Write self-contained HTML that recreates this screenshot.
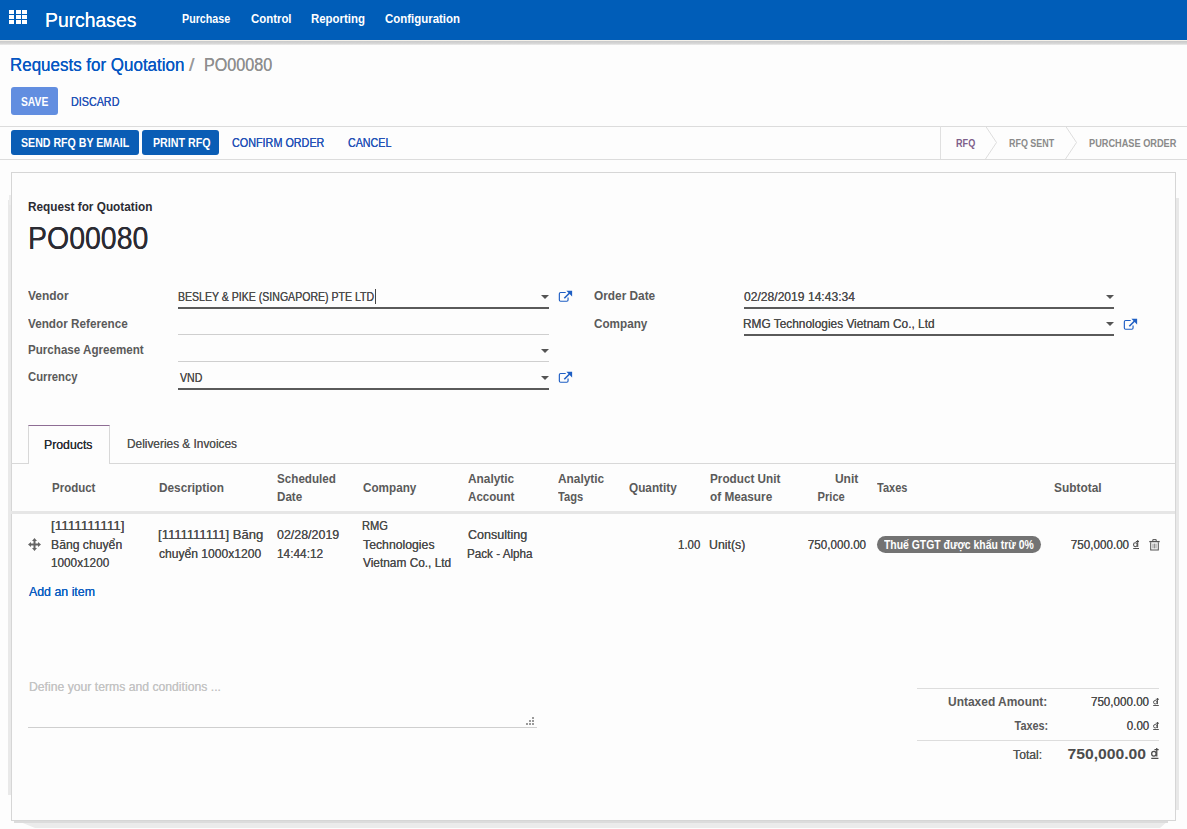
<!DOCTYPE html><html><head><meta charset="utf-8"><style>
html,body{margin:0;padding:0;width:1187px;height:829px;overflow:hidden;background:#fdfdfd;font-family:"Liberation Sans",sans-serif;position:relative}
.t{position:absolute;white-space:nowrap}
</style></head><body>
<div style="position:absolute;left:0;top:0;width:1187px;height:40px;background:#005db8"></div>
<div style="position:absolute;left:0;top:40px;width:1187px;height:1px;background:#f4f1ea"></div>
<div style="position:absolute;left:0;top:41px;width:1187px;height:4px;background:linear-gradient(#c9c9c9,#d6d6d6 60%,#ececec)"></div>
<div style="position:absolute;left:9.0px;top:10px;width:5px;height:4px;background:#fff"></div><div style="position:absolute;left:15.5px;top:10px;width:5px;height:4px;background:#fff"></div><div style="position:absolute;left:22.0px;top:10px;width:5px;height:4px;background:#fff"></div><div style="position:absolute;left:9.0px;top:15px;width:5px;height:4px;background:#fff"></div><div style="position:absolute;left:15.5px;top:15px;width:5px;height:4px;background:#fff"></div><div style="position:absolute;left:22.0px;top:15px;width:5px;height:4px;background:#fff"></div><div style="position:absolute;left:9.0px;top:20px;width:5px;height:4px;background:#fff"></div><div style="position:absolute;left:15.5px;top:20px;width:5px;height:4px;background:#fff"></div><div style="position:absolute;left:22.0px;top:20px;width:5px;height:4px;background:#fff"></div>
<div style="position:absolute;left:11px;top:87px;width:47px;height:28px;background:#628ee0;border-radius:3px"></div>
<div style="position:absolute;left:0;top:126px;width:1187px;height:1px;background:#dcdcdc"></div>
<div style="position:absolute;left:11px;top:130px;width:128px;height:25px;background:#0a5db5;border-radius:3px"></div>
<div style="position:absolute;left:142px;top:130px;width:77px;height:25px;background:#0a5db5;border-radius:3px"></div>
<div style="position:absolute;left:0;top:159px;width:1187px;height:1px;background:#dcdcdc"></div>
<div style="position:absolute;left:940px;top:126px;width:1px;height:33px;background:#e0e0e0"></div>
<svg style="position:absolute;left:980px;top:126px" width="100" height="33"><polyline points="5.5,0 16.5,16.5 5.5,33" fill="none" stroke="#dedede" stroke-width="1"/><polyline points="85.5,0 96.5,16.5 85.5,33" fill="none" stroke="#dedede" stroke-width="1"/></svg>
<div style="position:absolute;left:8px;top:200px;width:3px;height:595px;background:#e9e9e9"></div>
<div style="position:absolute;left:9px;top:195px;width:2px;height:10px;background:#ededed"></div>
<div style="position:absolute;left:1176px;top:198px;width:3px;height:612px;background:#e8e8e8"></div>
<svg style="position:absolute;left:0;top:819px" width="1187" height="10"><polygon points="18,2 1168,2 1160,9 35,9" fill="#ebebeb"/><rect x="14" y="2" width="1154" height="2" fill="#dcdcdc"/></svg>
<div style="position:absolute;left:11px;top:172px;width:1163px;height:647px;border:1px solid #d6d6d6;background:#fdfdfd"></div>
<div style="position:absolute;left:375px;top:289px;width:1px;height:15px;background:#444"></div>
<div style="position:absolute;left:178px;top:307px;width:371px;height:2px;background:#5a5a5a"></div>
<div style="position:absolute;left:178px;top:334px;width:371px;height:1px;background:#cfcfcf"></div>
<div style="position:absolute;left:178px;top:361px;width:371px;height:1px;background:#cfcfcf"></div>
<div style="position:absolute;left:178px;top:388px;width:371px;height:2px;background:#5a5a5a"></div>
<div style="position:absolute;left:744px;top:307px;width:370px;height:2px;background:#5a5a5a"></div>
<div style="position:absolute;left:744px;top:334px;width:370px;height:2px;background:#5a5a5a"></div>
<svg style="position:absolute;left:541.4px;top:295px" width="8" height="4"><polygon points="0,0 8,0 4,4" fill="#555"/></svg>
<svg style="position:absolute;left:541.4px;top:349px" width="8" height="4"><polygon points="0,0 8,0 4,4" fill="#555"/></svg>
<svg style="position:absolute;left:541.4px;top:376px" width="8" height="4"><polygon points="0,0 8,0 4,4" fill="#555"/></svg>
<svg style="position:absolute;left:1106.2px;top:295px" width="8" height="4"><polygon points="0,0 8,0 4,4" fill="#555"/></svg>
<svg style="position:absolute;left:1106.2px;top:322px" width="8" height="4"><polygon points="0,0 8,0 4,4" fill="#555"/></svg>
<svg style="position:absolute;left:558px;top:290px" width="15" height="13" viewBox="0 0 15 13"><path d="M7.7 2.45 H2.6 Q1.35 2.45 1.35 3.7 V10 Q1.35 11.25 2.6 11.25 H8.8 Q10.05 11.25 10.05 10 V7.5" fill="none" stroke="#1f5fc4" stroke-width="1.15"/><path d="M6.3 8.3 L11.8 2.8" stroke="#1f5fc4" stroke-width="1.6"/><polygon points="8.4,0.7 14.1,0.7 14.1,6.4" fill="#1f5fc4"/></svg>
<svg style="position:absolute;left:558.2px;top:371.4px" width="15" height="13" viewBox="0 0 15 13"><path d="M7.7 2.45 H2.6 Q1.35 2.45 1.35 3.7 V10 Q1.35 11.25 2.6 11.25 H8.8 Q10.05 11.25 10.05 10 V7.5" fill="none" stroke="#1f5fc4" stroke-width="1.15"/><path d="M6.3 8.3 L11.8 2.8" stroke="#1f5fc4" stroke-width="1.6"/><polygon points="8.4,0.7 14.1,0.7 14.1,6.4" fill="#1f5fc4"/></svg>
<svg style="position:absolute;left:1123.4px;top:318px" width="15" height="13" viewBox="0 0 15 13"><path d="M7.7 2.45 H2.6 Q1.35 2.45 1.35 3.7 V10 Q1.35 11.25 2.6 11.25 H8.8 Q10.05 11.25 10.05 10 V7.5" fill="none" stroke="#1f5fc4" stroke-width="1.15"/><path d="M6.3 8.3 L11.8 2.8" stroke="#1f5fc4" stroke-width="1.6"/><polygon points="8.4,0.7 14.1,0.7 14.1,6.4" fill="#1f5fc4"/></svg>
<div style="position:absolute;left:11px;top:463px;width:1164px;height:1px;background:#d8d8d8"></div>
<div style="position:absolute;left:28px;top:425px;width:80px;height:38px;border:1px solid #d8d8d8;border-top-color:#8e6d94;border-bottom:none;background:#fdfdfd"></div>
<div style="position:absolute;left:29px;top:463px;width:80px;height:1px;background:#fdfdfd"></div>
<div style="position:absolute;left:11px;top:511px;width:1164px;height:3px;background:#e6e6e6"></div>
<div style="position:absolute;left:877px;top:536px;width:164px;height:17px;background:#737373;border-radius:9px"></div>
<svg style="position:absolute;left:1132.7px;top:540px" width="6.3" height="9" viewBox="0 0 6 9" preserveAspectRatio="none"><ellipse cx="2.25" cy="4.75" rx="1.75" ry="1.95" fill="none" stroke="#4c4c4c" stroke-width="1"/><path d="M4.5 0 V6.9 M2.7 1.4 H6 M0.2 8.45 H5.8" stroke="#4c4c4c" stroke-width="1" fill="none"/></svg>
<svg style="position:absolute;left:28px;top:538px" width="13" height="13" viewBox="0 0 13 13"><path d="M6.5 0 L9 3 H7.5 V5.5 H10 V4 L13 6.5 L10 9 V7.5 H7.5 V10 H9 L6.5 13 L4 10 H5.5 V7.5 H3 V9 L0 6.5 L3 4 V5.5 H5.5 V3 H4 Z" fill="#666"/></svg>
<svg style="position:absolute;left:1148.5px;top:538.5px" width="11" height="12" viewBox="0 0 11 12"><path d="M3.8 2 V0.6 H7.2 V2" fill="none" stroke="#555" stroke-width="1"/><path d="M0.3 2.6 H10.7" stroke="#555" stroke-width="1.3"/><path d="M1.7 3.2 V10.9 H9.3 V3.2" fill="none" stroke="#555" stroke-width="1.05"/><path d="M4 4.6 V9.4 M5.5 4.6 V9.4 M7 4.6 V9.4" stroke="#777" stroke-width="0.8"/></svg>
<div style="position:absolute;left:28px;top:727px;width:509px;height:1px;background:#cfcfcf"></div>
<svg style="position:absolute;left:0;top:0" width="540" height="730"><rect x="526" y="723" width="2" height="2" fill="#9a9a9a"/><rect x="529" y="723" width="2" height="2" fill="#9a9a9a"/><rect x="532" y="723" width="2" height="2" fill="#9a9a9a"/><rect x="529" y="720" width="2" height="2" fill="#9a9a9a"/><rect x="532" y="720" width="2" height="2" fill="#9a9a9a"/><rect x="532" y="717" width="2" height="2" fill="#9a9a9a"/></svg>
<div style="position:absolute;left:917px;top:688px;width:242px;height:1px;background:#dddddd"></div>
<div style="position:absolute;left:917px;top:740px;width:242px;height:1px;background:#dddddd"></div>
<svg style="position:absolute;left:1153px;top:698px" width="6" height="8" viewBox="0 0 6 9" preserveAspectRatio="none"><ellipse cx="2.25" cy="4.75" rx="1.75" ry="1.95" fill="none" stroke="#4c4c4c" stroke-width="1"/><path d="M4.5 0 V6.9 M2.7 1.4 H6 M0.2 8.45 H5.8" stroke="#4c4c4c" stroke-width="1" fill="none"/></svg>
<svg style="position:absolute;left:1153px;top:722px" width="6" height="8" viewBox="0 0 6 9" preserveAspectRatio="none"><ellipse cx="2.25" cy="4.75" rx="1.75" ry="1.95" fill="none" stroke="#4c4c4c" stroke-width="1"/><path d="M4.5 0 V6.9 M2.7 1.4 H6 M0.2 8.45 H5.8" stroke="#4c4c4c" stroke-width="1" fill="none"/></svg>
<svg style="position:absolute;left:1151.2px;top:748px" width="7.7" height="11" viewBox="0 0 6 9" preserveAspectRatio="none"><ellipse cx="2.25" cy="4.75" rx="1.75" ry="1.95" fill="none" stroke="#4c4c4c" stroke-width="1"/><path d="M4.5 0 V6.9 M2.7 1.4 H6 M0.2 8.45 H5.8" stroke="#4c4c4c" stroke-width="1" fill="none"/></svg>
<div class="t" id="nav_title" style="left:45.08px;transform-origin:0 0;top:9px;font-size:21px;line-height:21px;font-weight:normal;color:#ffffff;transform:scaleX(0.9210);text-shadow:0 0 0.4px currentColor;">Purchases</div>
<div class="t" id="nav_purchase" style="left:182.00px;transform-origin:0 0;top:12px;font-size:13px;line-height:13px;font-weight:bold;color:#ffffff;transform:scaleX(0.8233);">Purchase</div>
<div class="t" id="nav_control" style="left:251.00px;transform-origin:0 0;top:12px;font-size:13px;line-height:13px;font-weight:bold;color:#ffffff;transform:scaleX(0.8772);">Control</div>
<div class="t" id="nav_reporting" style="left:311.00px;transform-origin:0 0;top:12px;font-size:13px;line-height:13px;font-weight:bold;color:#ffffff;transform:scaleX(0.8789);">Reporting</div>
<div class="t" id="nav_config" style="left:385.00px;transform-origin:0 0;top:12px;font-size:13px;line-height:13px;font-weight:bold;color:#ffffff;transform:scaleX(0.8796);">Configuration</div>
<div class="t" id="bc1" style="left:10.06px;transform-origin:0 0;top:56px;font-size:18px;line-height:18px;font-weight:normal;color:#0656c2;transform:scaleX(0.9421);text-shadow:0 0 0.4px currentColor;">Requests for Quotation</div>
<div class="t" id="bc_sl" style="left:189.00px;transform-origin:0 0;top:56px;font-size:18px;line-height:18px;font-weight:normal;color:#9a9a9a;transform:scaleX(1.1000);text-shadow:0 0 0.4px currentColor;">/</div>
<div class="t" id="bc2" style="left:203.80px;transform-origin:0 0;top:56px;font-size:18px;line-height:18px;font-weight:normal;color:#8f8f8f;transform:scaleX(0.8967);text-shadow:0 0 0.4px currentColor;">PO00080</div>
<div class="t" id="b_save" style="left:21.20px;transform-origin:0 0;top:96px;font-size:12px;line-height:12px;font-weight:bold;color:#ffffff;transform:scaleX(0.8589);">SAVE</div>
<div class="t" id="b_discard" style="left:70.60px;transform-origin:0 0;top:96px;font-size:12px;line-height:12px;font-weight:normal;color:#2452b6;transform:scaleX(0.8962);text-shadow:0 0 0.4px currentColor;">DISCARD</div>
<div class="t" id="b_send" style="left:21.20px;transform-origin:0 0;top:137px;font-size:12px;line-height:12px;font-weight:bold;color:#ffffff;transform:scaleX(0.8844);">SEND RFQ BY EMAIL</div>
<div class="t" id="b_print" style="left:152.60px;transform-origin:0 0;top:137px;font-size:12px;line-height:12px;font-weight:bold;color:#ffffff;transform:scaleX(0.8892);">PRINT RFQ</div>
<div class="t" id="b_confirm" style="left:232.00px;transform-origin:0 0;top:137px;font-size:12px;line-height:12px;font-weight:normal;color:#2452b6;transform:scaleX(0.9000);text-shadow:0 0 0.4px currentColor;">CONFIRM ORDER</div>
<div class="t" id="b_cancel" style="left:348.00px;transform-origin:0 0;top:137px;font-size:12px;line-height:12px;font-weight:normal;color:#2452b6;transform:scaleX(0.8917);text-shadow:0 0 0.4px currentColor;">CANCEL</div>
<div class="t" id="st_rfq" style="left:956.30px;transform-origin:0 0;top:138px;font-size:11px;line-height:11px;font-weight:bold;color:#7d5f8a;transform:scaleX(0.8283);">RFQ</div>
<div class="t" id="st_sent" style="left:1009.30px;transform-origin:0 0;top:138px;font-size:11px;line-height:11px;font-weight:bold;color:#8a8a8a;transform:scaleX(0.8123);">RFQ SENT</div>
<div class="t" id="st_po" style="left:1088.60px;transform-origin:0 0;top:138px;font-size:11px;line-height:11px;font-weight:bold;color:#8a8a8a;transform:scaleX(0.8358);">PURCHASE ORDER</div>
<div class="t" id="t_rfq" style="left:28.40px;transform-origin:0 0;top:200px;font-size:13px;line-height:13px;font-weight:bold;color:#2b2b33;transform:scaleX(0.9062);">Request for Quotation</div>
<div class="t" id="t_po" style="left:28.16px;transform-origin:0 0;top:223px;font-size:31px;line-height:31px;font-weight:normal;color:#2b2b33;transform:scaleX(0.9188);text-shadow:0 0 0.4px currentColor;">PO00080</div>
<div class="t" id="l_vendor" style="left:28.30px;transform-origin:0 0;top:289px;font-size:13px;line-height:13px;font-weight:bold;color:#5a5a5a;transform:scaleX(0.9203);">Vendor</div>
<div class="t" id="l_vref" style="left:28.30px;transform-origin:0 0;top:317px;font-size:13px;line-height:13px;font-weight:bold;color:#5a5a5a;transform:scaleX(0.9020);">Vendor Reference</div>
<div class="t" id="l_pa" style="left:28.30px;transform-origin:0 0;top:343px;font-size:13px;line-height:13px;font-weight:bold;color:#5a5a5a;transform:scaleX(0.8927);">Purchase Agreement</div>
<div class="t" id="l_cur" style="left:28.30px;transform-origin:0 0;top:370px;font-size:13px;line-height:13px;font-weight:bold;color:#5a5a5a;transform:scaleX(0.8678);">Currency</div>
<div class="t" id="v_vendor" style="left:178.49px;transform-origin:0 0;top:290px;font-size:13px;line-height:13px;font-weight:normal;color:#4c4c4c;transform:scaleX(0.8120);text-shadow:0 0 0.4px currentColor;">BESLEY & PIKE (SINGAPORE) PTE LTD</div>
<div class="t" id="v_cur" style="left:179.70px;transform-origin:0 0;top:371px;font-size:13px;line-height:13px;font-weight:normal;color:#4c4c4c;transform:scaleX(0.8130);text-shadow:0 0 0.4px currentColor;">VND</div>
<div class="t" id="l_od" style="left:593.80px;transform-origin:0 0;top:289px;font-size:13px;line-height:13px;font-weight:bold;color:#5a5a5a;transform:scaleX(0.9110);">Order Date</div>
<div class="t" id="l_comp" style="left:593.80px;transform-origin:0 0;top:317px;font-size:13px;line-height:13px;font-weight:bold;color:#5a5a5a;transform:scaleX(0.9000);">Company</div>
<div class="t" id="v_od" style="left:744.30px;transform-origin:0 0;top:290px;font-size:13px;line-height:13px;font-weight:normal;color:#4c4c4c;transform:scaleX(0.9307);text-shadow:0 0 0.4px currentColor;">02/28/2019 14:43:34</div>
<div class="t" id="v_comp" style="left:743.39px;transform-origin:0 0;top:317px;font-size:13px;line-height:13px;font-weight:normal;color:#4c4c4c;transform:scaleX(0.9133);text-shadow:0 0 0.4px currentColor;">RMG Technologies Vietnam Co., Ltd</div>
<div class="t" id="tab_prod" style="left:44.06px;transform-origin:0 0;top:438px;font-size:13px;line-height:13px;font-weight:normal;color:#2b2b33;transform:scaleX(0.9448);text-shadow:0 0 0.4px currentColor;">Products</div>
<div class="t" id="tab_del" style="left:127.49px;transform-origin:0 0;top:437px;font-size:13px;line-height:13px;font-weight:normal;color:#555555;transform:scaleX(0.9121);text-shadow:0 0 0.4px currentColor;">Deliveries & Invoices</div>
<div class="t" id="h_prod" style="left:51.60px;transform-origin:0 0;top:481px;font-size:13px;line-height:13px;font-weight:bold;color:#5a5a5a;transform:scaleX(0.8838);">Product</div>
<div class="t" id="h_desc" style="left:159.20px;transform-origin:0 0;top:481px;font-size:13px;line-height:13px;font-weight:bold;color:#5a5a5a;transform:scaleX(0.9082);">Description</div>
<div class="t" id="h_sch1" style="left:277.40px;transform-origin:0 0;top:472px;font-size:13px;line-height:13px;font-weight:bold;color:#5a5a5a;transform:scaleX(0.8967);">Scheduled</div>
<div class="t" id="h_sch2" style="left:277.40px;transform-origin:0 0;top:490px;font-size:13px;line-height:13px;font-weight:bold;color:#5a5a5a;transform:scaleX(0.8945);">Date</div>
<div class="t" id="h_comp" style="left:362.70px;transform-origin:0 0;top:481px;font-size:13px;line-height:13px;font-weight:bold;color:#5a5a5a;transform:scaleX(0.9000);">Company</div>
<div class="t" id="h_aa1" style="left:468.00px;transform-origin:0 0;top:472px;font-size:13px;line-height:13px;font-weight:bold;color:#5a5a5a;transform:scaleX(0.9138);">Analytic</div>
<div class="t" id="h_aa2" style="left:468.00px;transform-origin:0 0;top:490px;font-size:13px;line-height:13px;font-weight:bold;color:#5a5a5a;transform:scaleX(0.8923);">Account</div>
<div class="t" id="h_at1" style="left:557.70px;transform-origin:0 0;top:472px;font-size:13px;line-height:13px;font-weight:bold;color:#5a5a5a;transform:scaleX(0.9138);">Analytic</div>
<div class="t" id="h_at2" style="left:557.70px;transform-origin:0 0;top:490px;font-size:13px;line-height:13px;font-weight:bold;color:#5a5a5a;transform:scaleX(0.8577);">Tags</div>
<div class="t" id="h_qty" style="left:629.20px;transform-origin:0 0;top:481px;font-size:13px;line-height:13px;font-weight:bold;color:#5a5a5a;transform:scaleX(0.9066);">Quantity</div>
<div class="t" id="h_uom1" style="left:710.30px;transform-origin:0 0;top:472px;font-size:13px;line-height:13px;font-weight:bold;color:#5a5a5a;transform:scaleX(0.9026);">Product Unit</div>
<div class="t" id="h_uom2" style="left:710.30px;transform-origin:0 0;top:490px;font-size:13px;line-height:13px;font-weight:bold;color:#5a5a5a;transform:scaleX(0.9064);">of Measure</div>
<div class="t" id="h_up1" style="right:329.22px;transform-origin:100% 0;top:472px;font-size:13px;line-height:13px;font-weight:bold;color:#5a5a5a;transform:scaleX(0.9252);">Unit</div>
<div class="t" id="h_up2" style="right:342.20px;transform-origin:100% 0;top:490px;font-size:13px;line-height:13px;font-weight:bold;color:#5a5a5a;transform:scaleX(0.8552);">Price</div>
<div class="t" id="h_tax" style="left:877.00px;transform-origin:0 0;top:481px;font-size:13px;line-height:13px;font-weight:bold;color:#5a5a5a;transform:scaleX(0.8467);">Taxes</div>
<div class="t" id="h_sub" style="left:1053.70px;transform-origin:0 0;top:481px;font-size:13px;line-height:13px;font-weight:bold;color:#5a5a5a;transform:scaleX(0.9147);">Subtotal</div>
<div class="t" id="r_p1" style="left:50.60px;transform-origin:0 0;top:519px;font-size:13px;line-height:13px;font-weight:normal;color:#4c4c4c;transform:scaleX(1.0380);text-shadow:0 0 0.4px currentColor;">[1111111111]</div>
<div class="t" id="r_p2" style="left:50.86px;transform-origin:0 0;top:538px;font-size:13px;line-height:13px;font-weight:normal;color:#4c4c4c;transform:scaleX(0.9376);text-shadow:0 0 0.4px currentColor;">Băng chuyển</div>
<div class="t" id="r_p3" style="left:50.60px;transform-origin:0 0;top:556px;font-size:13px;line-height:13px;font-weight:normal;color:#4c4c4c;transform:scaleX(0.9047);text-shadow:0 0 0.4px currentColor;">1000x1200</div>
<div class="t" id="r_d1" style="left:158.40px;transform-origin:0 0;top:528px;font-size:13px;line-height:13px;font-weight:normal;color:#4c4c4c;transform:scaleX(1.0040);text-shadow:0 0 0.4px currentColor;">[1111111111] Băng</div>
<div class="t" id="r_d2" style="left:159.20px;transform-origin:0 0;top:547px;font-size:13px;line-height:13px;font-weight:normal;color:#4c4c4c;transform:scaleX(0.9303);text-shadow:0 0 0.4px currentColor;">chuyển 1000x1200</div>
<div class="t" id="r_dt1" style="left:277.40px;transform-origin:0 0;top:528px;font-size:13px;line-height:13px;font-weight:normal;color:#4c4c4c;transform:scaleX(0.9563);text-shadow:0 0 0.4px currentColor;">02/28/2019</div>
<div class="t" id="r_dt2" style="left:276.80px;transform-origin:0 0;top:547px;font-size:13px;line-height:13px;font-weight:normal;color:#4c4c4c;transform:scaleX(0.9132);text-shadow:0 0 0.4px currentColor;">14:44:12</div>
<div class="t" id="r_c1" style="left:361.84px;transform-origin:0 0;top:519px;font-size:13px;line-height:13px;font-weight:normal;color:#4c4c4c;transform:scaleX(0.8557);text-shadow:0 0 0.4px currentColor;">RMG</div>
<div class="t" id="r_c2" style="left:362.70px;transform-origin:0 0;top:538px;font-size:13px;line-height:13px;font-weight:normal;color:#4c4c4c;transform:scaleX(0.9426);text-shadow:0 0 0.4px currentColor;">Technologies</div>
<div class="t" id="r_c3" style="left:362.70px;transform-origin:0 0;top:556px;font-size:13px;line-height:13px;font-weight:normal;color:#4c4c4c;transform:scaleX(0.9132);text-shadow:0 0 0.4px currentColor;">Vietnam Co., Ltd</div>
<div class="t" id="r_a1" style="left:468.00px;transform-origin:0 0;top:528px;font-size:13px;line-height:13px;font-weight:normal;color:#4c4c4c;transform:scaleX(0.9641);text-shadow:0 0 0.4px currentColor;">Consulting</div>
<div class="t" id="r_a2" style="left:467.10px;transform-origin:0 0;top:547px;font-size:13px;line-height:13px;font-weight:normal;color:#4c4c4c;transform:scaleX(0.8983);text-shadow:0 0 0.4px currentColor;">Pack - Alpha</div>
<div class="t" id="r_qty" style="right:486.80px;transform-origin:100% 0;top:538px;font-size:13px;line-height:13px;font-weight:normal;color:#4c4c4c;transform:scaleX(0.8775);text-shadow:0 0 0.4px currentColor;">1.00</div>
<div class="t" id="r_uom" style="left:709.35px;transform-origin:0 0;top:538px;font-size:13px;line-height:13px;font-weight:normal;color:#4c4c4c;transform:scaleX(0.9473);text-shadow:0 0 0.4px currentColor;">Unit(s)</div>
<div class="t" id="r_up" style="right:320.59px;transform-origin:100% 0;top:538px;font-size:13px;line-height:13px;font-weight:normal;color:#4c4c4c;transform:scaleX(0.8946);text-shadow:0 0 0.4px currentColor;">750,000.00</div>
<div class="t" id="r_tax" style="left:884.00px;transform-origin:0 0;top:539px;font-size:12px;line-height:12px;font-weight:bold;color:#ffffff;transform:scaleX(0.8674);">Thuế GTGT được khấu trừ 0%</div>
<div class="t" id="r_sub" style="right:57.79px;transform-origin:100% 0;top:538px;font-size:13px;line-height:13px;font-weight:normal;color:#4c4c4c;transform:scaleX(0.8946);text-shadow:0 0 0.4px currentColor;">750,000.00</div>
<div class="t" id="add_item" style="left:28.80px;transform-origin:0 0;top:585px;font-size:13px;line-height:13px;font-weight:normal;color:#0b5cc0;transform:scaleX(0.9512);text-shadow:0 0 0.4px currentColor;">Add an item</div>
<div class="t" id="terms" style="left:28.66px;transform-origin:0 0;top:680px;font-size:13px;line-height:13px;font-weight:normal;color:#c4c4c4;transform:scaleX(0.9385);text-shadow:0 0 0.4px currentColor;">Define your terms and conditions ...</div>
<div class="t" id="tot_l1" style="left:947.60px;transform-origin:0 0;top:695px;font-size:13px;line-height:13px;font-weight:bold;color:#5a5a5a;transform:scaleX(0.9204);">Untaxed Amount:</div>
<div class="t" id="tot_v1" style="right:37.49px;transform-origin:100% 0;top:695px;font-size:13px;line-height:13px;font-weight:normal;color:#4c4c4c;transform:scaleX(0.8931);text-shadow:0 0 0.4px currentColor;">750,000.00</div>
<div class="t" id="tot_l2" style="right:138.72px;transform-origin:100% 0;top:719px;font-size:13px;line-height:13px;font-weight:bold;color:#5a5a5a;transform:scaleX(0.8372);">Taxes:</div>
<div class="t" id="tot_v2" style="right:37.50px;transform-origin:100% 0;top:719px;font-size:13px;line-height:13px;font-weight:normal;color:#4c4c4c;transform:scaleX(0.8894);text-shadow:0 0 0.4px currentColor;">0.00</div>
<div class="t" id="tot_l3" style="right:145.03px;transform-origin:100% 0;top:748px;font-size:13px;line-height:13px;font-weight:normal;color:#555555;transform:scaleX(0.9324);text-shadow:0 0 0.4px currentColor;">Total:</div>
<div class="t" id="tot_v3" style="right:40.84px;transform-origin:100% 0;top:746px;font-size:15px;line-height:15px;font-weight:bold;color:#4c4c4c;transform:scaleX(1.0464);">750,000.00</div>
</body></html>
